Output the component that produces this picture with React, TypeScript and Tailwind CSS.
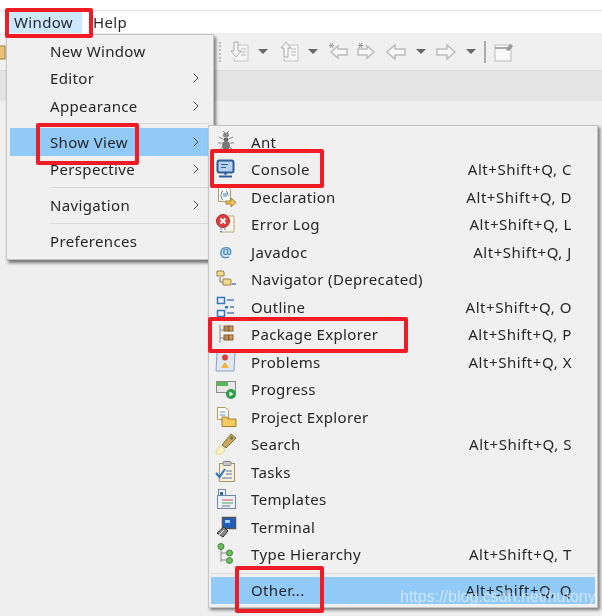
import { ChevronRight } from 'lucide-react'
import type { ReactNode } from 'react'

const font = { fontFamily: '"Noto Sans", sans-serif' }

function Ico({ children }: { children: ReactNode }) {
  return (
    <svg width="24" height="24" viewBox="0 0 24 24" fill="none" className="shrink-0">
      {children}
    </svg>
  )
}

const icons: Record<string, ReactNode> = {
  ant: (
    <Ico>
      <ellipse cx="12" cy="5" rx="3" ry="2.500" fill="#888" />
      <ellipse cx="12" cy="9.500" rx="2.500" ry="2" fill="#666" />
      <ellipse cx="12" cy="15.500" rx="4" ry="4.500" fill="#777" />
      <path d="M5 7l4 2M19 7l-4 2M4 13h4M20 13h-4M5 20l4-3M19 20l-4-3M9 1l2 2M15 1l-2 2" stroke="#888" />
    </Ico>
  ),
  console: (
    <Ico>
      <rect x="3.500" y="3.500" width="16" height="12" rx="2" fill="#b7d3ee" stroke="#2c5e96" strokeWidth="2" />
      <path d="M7 7.500h7M7 10.500h5" stroke="#2c5e96" />
      <path d="M11.500 16v2M5 19.500h13" stroke="#2c5e96" strokeWidth="2" />
    </Ico>
  ),
  declaration: (
    <Ico>
      <path d="M4.500 2.500h10l2 2v12h-12z" fill="#fff" stroke="#b5995a" />
      <path d="M9 6c-2 0-1 4-2.500 4.500C8 11 7 15 9 15M12 6c2 0 1 4 2.500 4.500" stroke="#3f78ad" />
      <path d="M9 9h4M9 11h4" stroke="#3f78ad" />
      <path d="M12 16h5v-3l5 4.500-5 4.500v-3h-5z" fill="#eec25d" stroke="#a87f2a" />
    </Ico>
  ),
  error: (
    <Ico>
      <path d="M8 4h12v16H6" fill="#f7f5ea" stroke="#b9ab7b" />
      <circle cx="9" cy="9" r="6.500" fill="#d9403d" stroke="#ad2a2a" />
      <path d="M6.500 6.500l5 5M11.500 6.500l-5 5" stroke="#fff" strokeWidth="2" />
      <path d="M6 17h2M6 19.500h2M10 17h2" stroke="#5a7da5" />
    </Ico>
  ),
  javadoc: (
    <Ico>
      <text x="12" y="17" textAnchor="middle" fontSize="14" fontWeight="700" fill="#4b8fc4" style={font}>
        @
      </text>
    </Ico>
  ),
  navigator: (
    <Ico>
      <path d="M3 4h6l1 1v4H3z" fill="#f3d98a" stroke="#9c8244" />
      <path d="M9 12h7l1 1v5H9z" fill="#f3d98a" stroke="#9c8244" />
      <path d="M6 10v5h3" stroke="#777" />
      <path d="M18 17h4" stroke="#5a7da5" strokeWidth="1.500" />
    </Ico>
  ),
  outline: (
    <Ico>
      <rect x="3.500" y="2.500" width="7" height="6" stroke="#2e78c2" strokeWidth="1.500" />
      <rect x="3.500" y="15.500" width="7" height="6" stroke="#2e78c2" strokeWidth="1.500" />
      <rect x="11" y="11" width="3" height="2.500" fill="#2e78c2" />
      <path d="M13 5h7M16 12h4M13 18h7" stroke="#5a7da5" strokeWidth="1.500" />
    </Ico>
  ),
  package: (
    <Ico>
      <path d="M6 3v18" stroke="#8a8a8a" />
      <path d="M6 8h4M6 16h4" stroke="#8a8a8a" />
      <rect x="10" y="4" width="5" height="5" fill="#b98a55" stroke="#8a5f2e" />
      <rect x="15" y="4" width="4" height="5" fill="#c99c68" stroke="#8a5f2e" />
      <rect x="10" y="13" width="5" height="5" fill="#b98a55" stroke="#8a5f2e" />
      <rect x="15" y="13" width="4" height="5" fill="#c99c68" stroke="#8a5f2e" />
    </Ico>
  ),
  problems: (
    <Ico>
      <path d="M3 2h18l-1 19H2z" fill="#dfe8f2" stroke="#8aa2bd" />
      <circle cx="11" cy="7.500" r="3" fill="#d9403d" />
      <path d="M11 12l4 6H7z" fill="#eeb23d" />
    </Ico>
  ),
  progress: (
    <Ico>
      <rect x="2.500" y="4.500" width="19" height="11" fill="#e8e8e8" stroke="#8a8a8a" />
      <rect x="3" y="5" width="11" height="4" fill="#5ab65a" />
      <circle cx="17" cy="17" r="5" fill="#2f9a47" />
      <path d="M15.500 14.500v5l4-2.500z" fill="#fff" />
    </Ico>
  ),
  project: (
    <Ico>
      <path d="M3.500 2.500h8l3 3v9h-11z" fill="#fff" stroke="#b5995a" />
      <path d="M5.500 7h6M5.500 10h6" stroke="#6b93bd" />
      <path d="M8 12h5l1 2h8v7.500H8z" fill="#f3cb62" stroke="#a87f2a" />
    </Ico>
  ),
  search: (
    <Ico>
      <path d="M2 22c0-4 2-7 5-8l4 4c-1 3-5 5-9 4z" fill="#fdf3c2" stroke="#e2d59a" />
      <path d="M8 13L17 2l5 4-10 10z" fill="#c8a95d" stroke="#7e6a3a" />
      <circle cx="17.500" cy="6" r="1.500" fill="#666" />
    </Ico>
  ),
  tasks: (
    <Ico>
      <rect x="5.500" y="3.500" width="15" height="18" fill="#f6efdc" stroke="#a89468" />
      <rect x="9" y="1.500" width="8" height="4" rx="1" fill="#c7c7c7" stroke="#888" />
      <path d="M2 13l3.500 4L11 9" stroke="#2d74c4" strokeWidth="2" />
      <path d="M12 11h6M12 14h6M8 18h10" stroke="#5a7da5" />
    </Ico>
  ),
  templates: (
    <Ico>
      <rect x="4.500" y="2.500" width="7" height="8" fill="#f6f6f6" stroke="#6f88a8" />
      <rect x="3.500" y="8.500" width="18" height="13" fill="#e9f0f8" stroke="#6f88a8" />
      <rect x="6" y="5" width="3" height="3" fill="#2f6bb0" />
      <path d="M8 13h11" stroke="#d9534f" />
      <path d="M8 16h11" stroke="#4fa35a" />
      <path d="M8 19h8" stroke="#777" />
    </Ico>
  ),
  terminal: (
    <Ico>
      <rect x="8.500" y="2.500" width="13" height="11" fill="#1f5fc0" stroke="#555" strokeWidth="1.500" />
      <rect x="11" y="5" width="5" height="3" fill="#9ed0f5" />
      <path d="M3 18l7-6 4 4-5 6z" fill="#888" stroke="#333" />
      <path d="M5 20l5-5" stroke="#eee" />
    </Ico>
  ),
  hierarchy: (
    <Ico>
      <path d="M7 6v14M7 11h8M7 18h8" stroke="#8a8a8a" />
      <circle cx="7" cy="4.500" r="3" fill="#6dbb5d" stroke="#3f8a3a" />
      <circle cx="15.500" cy="11" r="3" fill="#6dbb5d" stroke="#3f8a3a" />
      <circle cx="15.500" cy="18.500" r="3" fill="#6dbb5d" stroke="#3f8a3a" />
    </Ico>
  ),
}

const views = [
  { label: 'Ant', icon: 'ant', keys: '' },
  { label: 'Console', icon: 'console', keys: 'Alt+Shift+Q, C' },
  { label: 'Declaration', icon: 'declaration', keys: 'Alt+Shift+Q, D' },
  { label: 'Error Log', icon: 'error', keys: 'Alt+Shift+Q, L' },
  { label: 'Javadoc', icon: 'javadoc', keys: 'Alt+Shift+Q, J' },
  { label: 'Navigator (Deprecated)', icon: 'navigator', keys: '' },
  { label: 'Outline', icon: 'outline', keys: 'Alt+Shift+Q, O' },
  { label: 'Package Explorer', icon: 'package', keys: 'Alt+Shift+Q, P' },
  { label: 'Problems', icon: 'problems', keys: 'Alt+Shift+Q, X' },
  { label: 'Progress', icon: 'progress', keys: '' },
  { label: 'Project Explorer', icon: 'project', keys: '' },
  { label: 'Search', icon: 'search', keys: 'Alt+Shift+Q, S' },
  { label: 'Tasks', icon: 'tasks', keys: '' },
  { label: 'Templates', icon: 'templates', keys: '' },
  { label: 'Terminal', icon: 'terminal', keys: '' },
  { label: 'Type Hierarchy', icon: 'hierarchy', keys: 'Alt+Shift+Q, T' },
]

function Caret() {
  return <div className="w-0 h-0 border-x-[5px] border-x-transparent border-t-[5px] border-t-[#666]" />
}

function ToolIcon({ d, star }: { d: string; star?: boolean }) {
  return (
    <svg width="22" height="20" viewBox="0 0 22 20" fill="none">
      <path d={d} fill="#f7f7f7" stroke="#bcbcbc" strokeWidth="1.500" />
      {star && <path d="M3 1l3 5M6 1L3 6M2 3.500h5" stroke="#999" />}
    </svg>
  )
}

function DocArrow({ up }: { up?: boolean }) {
  return (
    <svg width="22" height="22" viewBox="0 0 22 22" fill="none">
      <path d="M7 4h12v16H5v-3" fill="#f5f5f5" stroke="#c4c4c4" />
      <path d="M12 8h5M12 11h5M12 14h5" stroke="#bbb" />
      <path
        d={up ? 'M7 1l5 6H9v9H5V7H2z' : 'M5 1h4v9h3l-5 6-5-6h3z'}
        fill="#f7f7f7"
        stroke="#aaa"
      />
    </svg>
  )
}

function Sep() {
  return <div className="h-px bg-[#d9d9d9]" />
}

function MainItem({ label, arrow, active }: { label: string; arrow?: boolean; active?: boolean }) {
  return (
    <div className={`h-[27.5px] flex items-center pl-[40px] pr-[6px] ${active ? 'bg-[#91c9f7]' : ''}`}>
      <span className="flex-1">{label}</span>
      {arrow && <ChevronRight size={16} strokeWidth={1.5} className="text-[#444]" />}
    </div>
  )
}

function Red({ className }: { className: string }) {
  return <div className={`absolute border-[4px] border-[#ee1c25] rounded-[2px] ${className}`} />
}

export default function App() {
  return (
    <div
      className="relative w-[602px] h-[616px] overflow-hidden bg-[#efefef] text-[15px] text-[#262626] tracking-[0.35px] blur-[0.35px]"
      style={font}
    >
      {/* menu bar */}
      <div className="h-[33px] bg-white pt-[10px]">
        <div className="h-[23px] border-t border-[#e4e4e4] flex items-center pl-[10px]">
          <div className="w-[72px] h-[22px] bg-[#cce8ff] pl-[4px] leading-[22px]">Window</div>
          <span className="ml-[11px]">Help</span>
        </div>
      </div>

      {/* toolbar */}
      <div className="h-[38px] bg-[#f0f0f0] border-b border-[#dcdcdc] flex items-center">
        <svg width="7" height="18" viewBox="0 0 7 18" fill="none">
          <path d="M-6 3h11v13H-6z" fill="#e6c27a" stroke="#9c7a3a" />
        </svg>
        <div className="ml-[212px] w-[2px] h-[20px] border-l-2 border-dotted border-[#bbb]" />
        <div className="ml-[8px]"><DocArrow /></div>
        <div className="ml-[7px]"><Caret /></div>
        <div className="ml-[11px]"><DocArrow up /></div>
        <div className="ml-[7px]"><Caret /></div>
        <div className="ml-[9px]"><ToolIcon star d="M4 10l7-6v3h9v6h-9v3z" /></div>
        <div className="ml-[7px]"><ToolIcon star d="M18 10l-7-6v3H2v6h9v3z" /></div>
        <div className="ml-[7px]"><ToolIcon d="M2 10l8-7v4h10v6H10v4z" /></div>
        <div className="ml-[9px]"><Caret /></div>
        <div className="ml-[9px]"><ToolIcon d="M20 10l-8-7v4H2v6h10v4z" /></div>
        <div className="ml-[9px]"><Caret /></div>
        <div className="ml-[8px] w-[2px] h-[22px] bg-[#aaa]" />
        <svg width="22" height="22" viewBox="0 0 22 22" fill="none" className="ml-[7px]">
          <rect x="2" y="4" width="16" height="16" fill="#f8f8f8" stroke="#bbb" />
          <path d="M2 7h16" stroke="#aaa" strokeWidth="2" />
          <path d="M13 9l4-6 3 2-4 5z" fill="#999" />
        </svg>
      </div>

      {/* tab band */}
      <div className="h-[30px] bg-[#e4e4e4]" />

      {/* Window menu */}
      <div className="absolute left-[6px] top-[34px] w-[208px] h-[226px] bg-[#f0f0f0] border border-[#c4c4c4] shadow-[2px_3px_3px_rgba(0,0,0,0.5)] pt-[2px] px-[3px]">
        <MainItem label="New Window" />
        <MainItem label="Editor" arrow />
        <MainItem label="Appearance" arrow />
        <div className="ml-[40px] my-[3.750px]"><Sep /></div>
        <MainItem label="Show View" arrow active />
        <MainItem label="Perspective" arrow />
        <div className="ml-[40px] my-[3.750px]"><Sep /></div>
        <MainItem label="Navigation" arrow />
        <div className="ml-[40px] my-[3.750px]"><Sep /></div>
        <MainItem label="Preferences" />
      </div>

      {/* Show View submenu */}
      <div className="absolute left-[208px] top-[125px] w-[390px] h-[483px] bg-[#f0f0f0] border border-[#c4c4c4] shadow-[2px_2px_3px_rgba(0,0,0,0.5)] pt-[2px] px-[2px]">
        {views.map((v) => (
          <div key={v.label} className="h-[27.5px] flex items-center pl-[3px] pr-[23px]">
            <div className="w-[37px] shrink-0">{icons[v.icon]}</div>
            <span className="flex-1">{v.label}</span>
            {v.keys && <span className="tracking-[0.55px]">{v.keys}</span>}
          </div>
        ))}
        <div className="mt-[5px] mb-[3px]"><Sep /></div>
        <div className="h-[27px] bg-[#91c9f7] flex items-center pl-[40px] pr-[23px]">
          <span className="flex-1">Other...</span>
          <span className="tracking-[0.55px]">Alt+Shift+Q, Q</span>
        </div>
      </div>

      {/* red annotation boxes */}
      <Red className="left-[5px] top-[8px] w-[88px] h-[30px]" />
      <Red className="left-[36px] top-[123px] w-[103px] h-[42px]" />
      <Red className="left-[210px] top-[149px] w-[114px] h-[39px]" />
      <Red className="left-[208px] top-[317px] w-[200px] h-[36px]" />
      <Red className="left-[235px] top-[566px] w-[89px] h-[47px]" />

      {/* watermark */}
      <div
        className="absolute left-[400px] top-[587px] text-[16px] leading-[20px] tracking-normal text-white/55 whitespace-nowrap"
        style={{ fontFamily: '"Liberation Sans", sans-serif' }}
      >
        https://blog.csdn.net/hutony
      </div>
    </div>
  )
}
